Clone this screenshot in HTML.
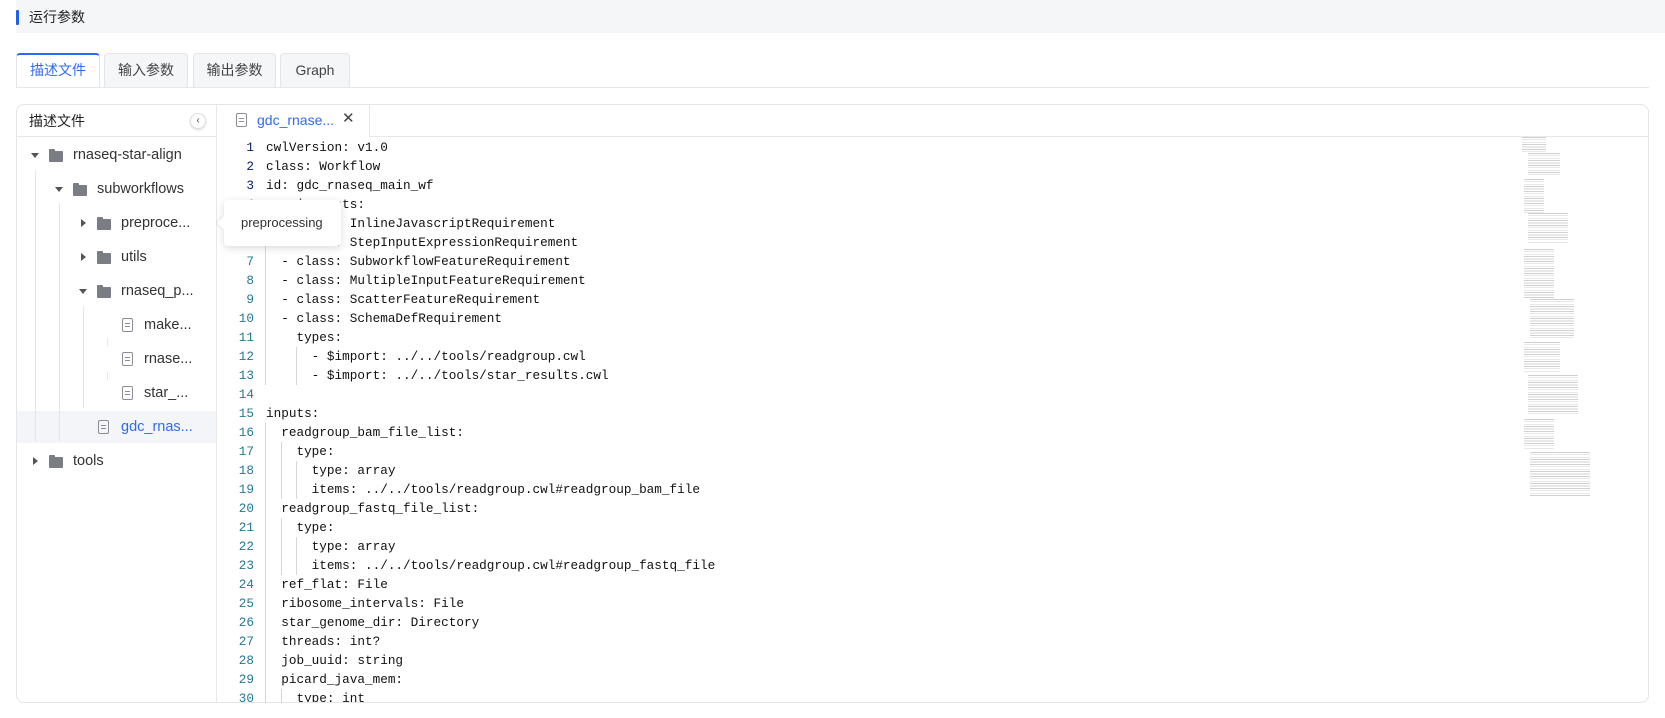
<!DOCTYPE html>
<html><head><meta charset="utf-8">
<style>
*{box-sizing:border-box;margin:0;padding:0}
body{width:1665px;height:718px;background:#fff;position:relative;overflow:hidden;font-family:"Liberation Sans","Noto Sans CJK SC",sans-serif;color:#333}
.abs{position:absolute}
.hdr{left:16px;top:0;width:1649px;height:33px;background:#f5f6f8}
.hdr .bar{position:absolute;left:0;top:10px;width:3px;height:15px;background:#1f5ff0;border-radius:1px}
.hdr .t{position:absolute;left:13px;top:7px;font-size:14px;color:#222}
.tab{top:53px;height:34px;border:1px solid #e2e4e8;border-bottom:none;border-radius:4px 4px 0 0;background:#f5f6f8;font-size:14px;color:#444;text-align:center;line-height:32px}
.tab.on{background:#fff;color:#2f6bf2;border-top:2px solid #2f6bf2;line-height:30px;height:35px}
.tabline{left:16px;top:87px;width:1633px;height:1px;background:#e6e8eb}
.panel{left:16px;top:104px;width:1633px;height:599px;border:1px solid #e3e5e8;border-radius:8px}
.row{position:absolute;font-size:14.5px;color:#333;height:34px;line-height:34px;white-space:nowrap}
.arr{position:absolute;width:0;height:0}
.dn{border-left:4px solid transparent;border-right:4px solid transparent;border-top:5px solid #555}
.rt{border-top:4px solid transparent;border-bottom:4px solid transparent;border-left:5px solid #555}
.fold{position:absolute;width:14px;height:11px;background:#7a7d83;border-radius:1px}
.fold:before{content:"";position:absolute;left:0;top:-2px;width:6px;height:3px;background:#7a7d83;border-radius:1px 1px 0 0}
.file{position:absolute;width:11px;height:14px;border:1.3px solid #8a8d93;border-radius:2px}
.file:before{content:"";position:absolute;left:2px;top:4px;width:5px;height:1.3px;background:#8a8d93;box-shadow:0 3px 0 #8a8d93}
.gl{position:absolute;width:1px;background:#e3e5e8}
.code{font-family:"Liberation Mono","DejaVu Sans Mono",monospace;font-size:12.7px;white-space:pre;color:#111}
.ln{position:absolute;left:217px;width:37px;text-align:right;font-family:"Liberation Mono",monospace;font-size:12.7px;color:#237893;height:19px;line-height:19px}
.cl{position:absolute;left:266px;height:19px;line-height:19px}
.ig{position:absolute;width:1px;background:#d6d6d6}
</style></head><body>
<div class="abs hdr"><div class="bar"></div><div class="t">运行参数</div></div>
<div class="abs tab on" style="left:16px;width:84px">描述文件</div>
<div class="abs tab" style="left:104px;width:84px">输入参数</div>
<div class="abs tab" style="left:193px;width:83px">输出参数</div>
<div class="abs tab" style="left:280px;width:70px">Graph</div>
<div class="abs tabline"></div>

<div class="abs panel"></div>
<div class="abs" style="left:29px;top:111px;font-size:14px;color:#222">描述文件</div>
<div class="abs" style="left:17px;top:136px;width:200px;height:1px;background:#e6e8eb"></div>
<div class="abs" style="left:190px;top:113px;width:16px;height:16px;border-radius:50%;border:1px solid #dcdfe3;background:#fff;box-shadow:0 1px 2px rgba(0,0,0,.15);font-size:10px;line-height:13px;text-align:center;color:#444">‹</div>
<div class="abs" style="left:216px;top:105px;width:1px;height:597px;background:#e6e8eb"></div>

<div class="abs" style="left:17px;top:411px;width:199px;height:32px;background:#f3f5f8"></div>
<div class="gl" style="left:35px;top:170px;height:272px"></div>
<div class="gl" style="left:59px;top:203px;height:238px"></div>
<div class="gl" style="left:83px;top:306px;height:102px"></div>
<div class="gl" style="left:107px;top:338px;height:8px"></div>
<div class="gl" style="left:107px;top:372px;height:8px"></div>

<div class="row" style="left:0;top:138px"><span class="arr dn" style="left:31px;top:15px"></span><span class="fold" style="left:49px;top:13px"></span><span style="position:absolute;left:73px">rnaseq-star-align</span></div>
<div class="row" style="left:0;top:172px"><span class="arr dn" style="left:55px;top:15px"></span><span class="fold" style="left:73px;top:13px"></span><span style="position:absolute;left:97px">subworkflows</span></div>
<div class="row" style="left:0;top:206px"><span class="arr rt" style="left:81px;top:13px"></span><span class="fold" style="left:97px;top:13px"></span><span style="position:absolute;left:121px">preproce...</span></div>
<div class="row" style="left:0;top:240px"><span class="arr rt" style="left:81px;top:13px"></span><span class="fold" style="left:97px;top:13px"></span><span style="position:absolute;left:121px">utils</span></div>
<div class="row" style="left:0;top:274px"><span class="arr dn" style="left:79px;top:15px"></span><span class="fold" style="left:97px;top:13px"></span><span style="position:absolute;left:121px">rnaseq_p...</span></div>
<div class="row" style="left:0;top:308px"><span class="file" style="left:122px;top:10px"></span><span style="position:absolute;left:144px">make...</span></div>
<div class="row" style="left:0;top:342px"><span class="file" style="left:122px;top:10px"></span><span style="position:absolute;left:144px">rnase...</span></div>
<div class="row" style="left:0;top:376px"><span class="file" style="left:122px;top:10px"></span><span style="position:absolute;left:144px">star_...</span></div>
<div class="row" style="left:0;top:410px;color:#2f6bf2"><span class="file" style="left:98px;top:10px"></span><span style="position:absolute;left:121px">gdc_rnas...</span></div>
<div class="row" style="left:0;top:444px"><span class="arr rt" style="left:33px;top:13px"></span><span class="fold" style="left:49px;top:13px"></span><span style="position:absolute;left:73px">tools</span></div>

<div class="abs" style="left:217px;top:136px;width:1431px;height:1px;background:#e6e8eb"></div>
<div class="abs" style="left:217px;top:105px;width:153px;height:32px;background:#fff;border-right:1px solid #e6e8eb"></div>
<div class="file" style="left:236px;top:113px"></div>
<div class="abs" style="left:257px;top:112px;font-size:14px;color:#2f6bf2">gdc_rnase...</div>
<div class="abs" style="left:342px;top:109px;font-size:15px;color:#444">✕</div>

<!-- indent guides -->
<div class="ig" style="left:265px;top:214px;height:171px"></div>
<div class="ig" style="left:296px;top:347px;height:38px"></div>
<div class="ig" style="left:265px;top:423px;height:280px"></div>
<div class="ig" style="left:281px;top:442px;height:57px"></div>
<div class="ig" style="left:296px;top:461px;height:38px"></div>
<div class="ig" style="left:281px;top:518px;height:57px"></div>
<div class="ig" style="left:296px;top:537px;height:38px"></div>
<div class="ig" style="left:281px;top:689px;height:14px"></div>

<div class="code">
<div class="ln" style="top:138px;color:#0b216f">1</div><div class="cl" style="top:138px">cwlVersion: v1.0</div>
<div class="ln" style="top:157px;color:#0b216f">2</div><div class="cl" style="top:157px">class: Workflow</div>
<div class="ln" style="top:176px;color:#0b216f">3</div><div class="cl" style="top:176px">id: gdc_rnaseq_main_wf</div>
<div class="ln" style="top:195px">4</div><div class="cl" style="top:195px">requirements:</div>
<div class="ln" style="top:214px">5</div><div class="cl" style="top:214px">  - class: InlineJavascriptRequirement</div>
<div class="ln" style="top:233px">6</div><div class="cl" style="top:233px">  - class: StepInputExpressionRequirement</div>
<div class="ln" style="top:252px">7</div><div class="cl" style="top:252px">  - class: SubworkflowFeatureRequirement</div>
<div class="ln" style="top:271px">8</div><div class="cl" style="top:271px">  - class: MultipleInputFeatureRequirement</div>
<div class="ln" style="top:290px">9</div><div class="cl" style="top:290px">  - class: ScatterFeatureRequirement</div>
<div class="ln" style="top:309px">10</div><div class="cl" style="top:309px">  - class: SchemaDefRequirement</div>
<div class="ln" style="top:328px">11</div><div class="cl" style="top:328px">    types:</div>
<div class="ln" style="top:347px">12</div><div class="cl" style="top:347px">      - $import: ../../tools/readgroup.cwl</div>
<div class="ln" style="top:366px">13</div><div class="cl" style="top:366px">      - $import: ../../tools/star_results.cwl</div>
<div class="ln" style="top:385px">14</div>
<div class="ln" style="top:404px">15</div><div class="cl" style="top:404px">inputs:</div>
<div class="ln" style="top:423px">16</div><div class="cl" style="top:423px">  readgroup_bam_file_list:</div>
<div class="ln" style="top:442px">17</div><div class="cl" style="top:442px">    type:</div>
<div class="ln" style="top:461px">18</div><div class="cl" style="top:461px">      type: array</div>
<div class="ln" style="top:480px">19</div><div class="cl" style="top:480px">      items: ../../tools/readgroup.cwl#readgroup_bam_file</div>
<div class="ln" style="top:499px">20</div><div class="cl" style="top:499px">  readgroup_fastq_file_list:</div>
<div class="ln" style="top:518px">21</div><div class="cl" style="top:518px">    type:</div>
<div class="ln" style="top:537px">22</div><div class="cl" style="top:537px">      type: array</div>
<div class="ln" style="top:556px">23</div><div class="cl" style="top:556px">      items: ../../tools/readgroup.cwl#readgroup_fastq_file</div>
<div class="ln" style="top:575px">24</div><div class="cl" style="top:575px">  ref_flat: File</div>
<div class="ln" style="top:594px">25</div><div class="cl" style="top:594px">  ribosome_intervals: File</div>
<div class="ln" style="top:613px">26</div><div class="cl" style="top:613px">  star_genome_dir: Directory</div>
<div class="ln" style="top:632px">27</div><div class="cl" style="top:632px">  threads: int?</div>
<div class="ln" style="top:651px">28</div><div class="cl" style="top:651px">  job_uuid: string</div>
<div class="ln" style="top:670px">29</div><div class="cl" style="top:670px">  picard_java_mem:</div>
<div class="ln" style="top:689px;height:13px;overflow:hidden">30</div><div class="cl" style="top:689px;height:13px;overflow:hidden">    type: int</div>
</div>

<div class="abs" style="left:1522px;top:137px;width:90px;height:360px;opacity:.55;
background:
repeating-linear-gradient(180deg,#aaa 0 0.8px,transparent 0.8px 2.4px) 0 0/24px 16px no-repeat,
repeating-linear-gradient(180deg,#aaa 0 0.8px,transparent 0.8px 2.4px) 6px 16px/32px 22px no-repeat,
repeating-linear-gradient(180deg,#aaa 0 0.8px,transparent 0.8px 2.4px) 2px 42px/20px 34px no-repeat,
repeating-linear-gradient(180deg,#aaa 0 0.8px,transparent 0.8px 2.4px) 6px 76px/40px 30px no-repeat,
repeating-linear-gradient(180deg,#aaa 0 0.8px,transparent 0.8px 2.4px) 2px 112px/30px 50px no-repeat,
repeating-linear-gradient(180deg,#aaa 0 0.8px,transparent 0.8px 2.4px) 8px 162px/44px 40px no-repeat,
repeating-linear-gradient(180deg,#aaa 0 0.8px,transparent 0.8px 2.4px) 2px 205px/36px 30px no-repeat,
repeating-linear-gradient(180deg,#aaa 0 0.8px,transparent 0.8px 2.4px) 6px 238px/50px 40px no-repeat,
repeating-linear-gradient(180deg,#aaa 0 0.8px,transparent 0.8px 2.4px) 2px 282px/30px 30px no-repeat,
repeating-linear-gradient(180deg,#aaa 0 0.8px,transparent 0.8px 2.4px) 8px 315px/60px 45px no-repeat;"></div>

<div class="abs" style="left:224px;top:200px;width:117px;height:46px;background:#fff;border-radius:4px;box-shadow:0 2px 8px rgba(0,0,0,.15);font-size:13px;color:#333;line-height:46px;padding-left:17px">preprocessing</div>
<div class="abs" style="left:219px;top:218px;width:10px;height:10px;background:#fff;transform:rotate(45deg);box-shadow:-1px 1px 2px rgba(0,0,0,.08)"></div>
</body></html>
